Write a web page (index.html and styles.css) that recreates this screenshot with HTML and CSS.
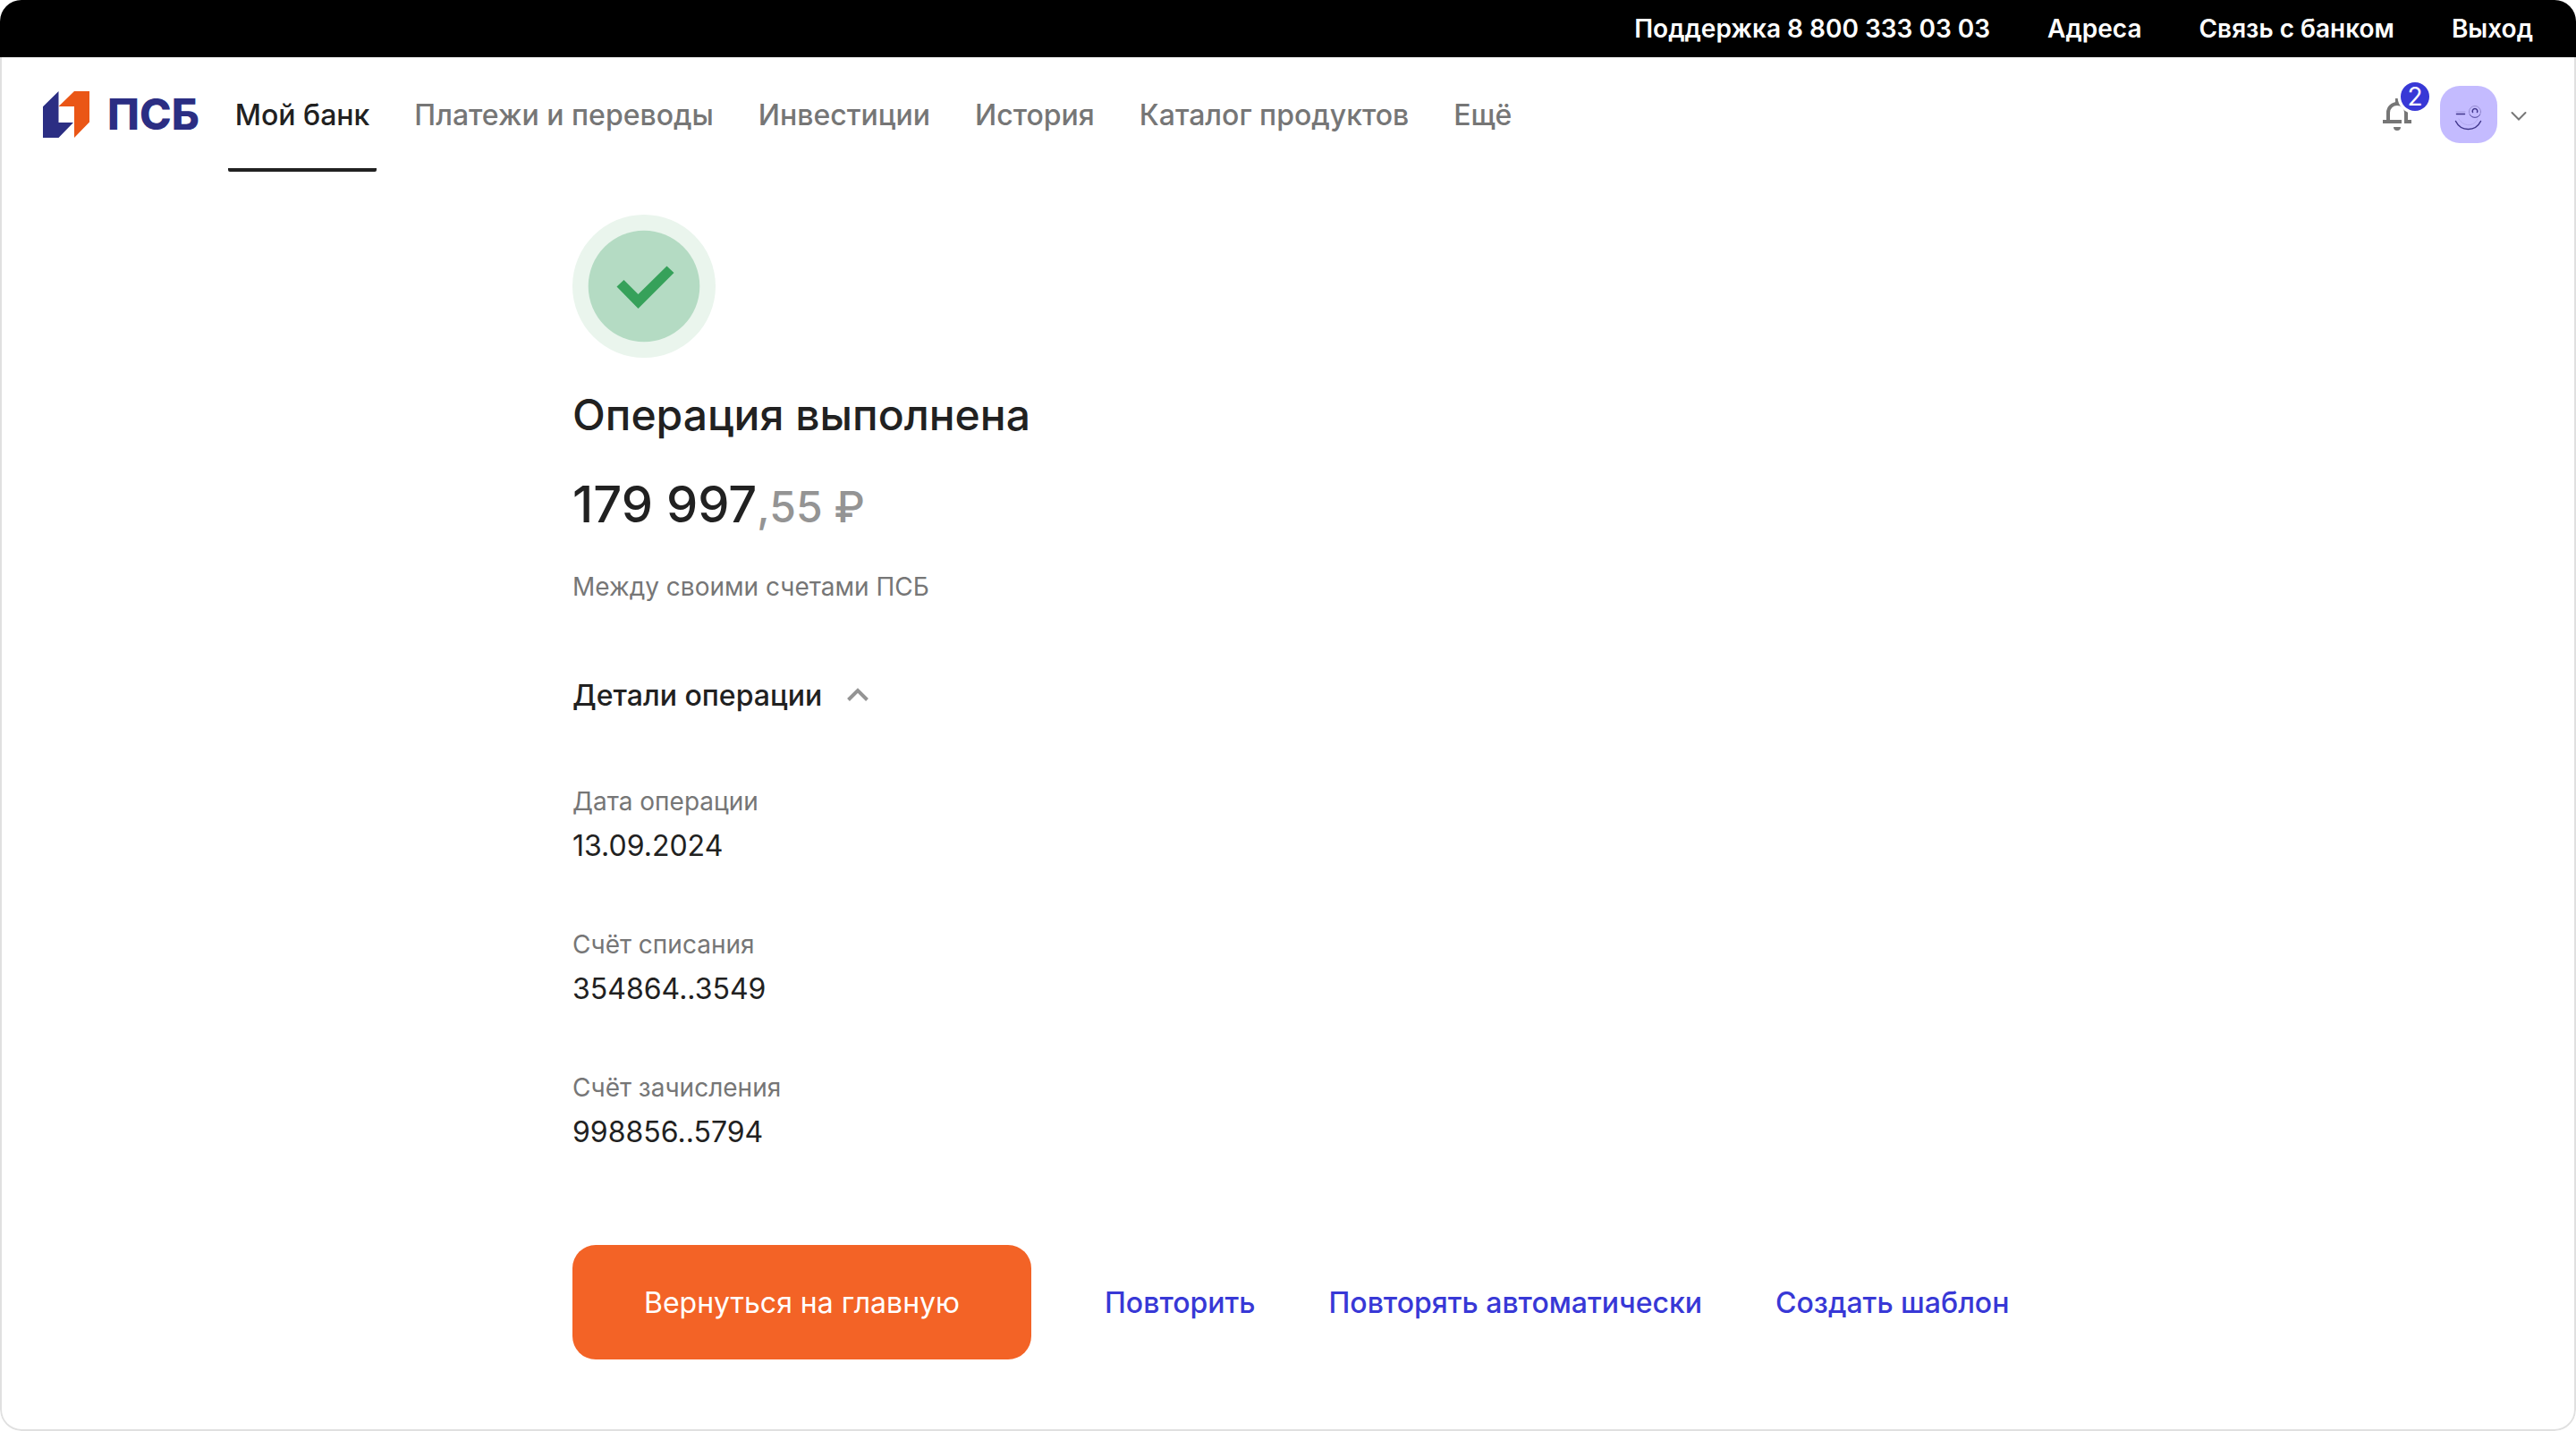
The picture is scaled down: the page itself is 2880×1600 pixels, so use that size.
FILE: index.html
```html
<!DOCTYPE html>
<html lang="ru">
<head>
  <meta charset="utf-8">
  <meta name="viewport" content="width=device-width, initial-scale=1">
  <title>ПСБ — Операция выполнена</title>
  <link rel="stylesheet" href="styles.css">
</head>
<body>
  <div class="app">
    <nav class="topbar" aria-label="Служебное меню">
      <a href="tel:88003330303">Поддержка 8 800 333 03 03</a>
      <a href="#addresses">Адреса</a>
      <a href="#contact">Связь с банком</a>
      <a href="#logout">Выход</a>
    </nav>

    <div class="panel">
      <header class="header">
        <a class="logo" href="#home">
          <svg class="logo-mark" viewBox="0 0 52 52" aria-hidden="true">
            <path fill="#2b2e83" d="M0 17.300 17.500 0V35H34L17.500 52H0z"/>
            <path fill="#ea5616" d="M17.500 17 35 0H52V34.500L35 52V17z"/>
          </svg>
          <span class="logo-text">ПСБ</span>
        </a>
        <nav class="menu" aria-label="Основное меню">
          <a class="menu-item menu-item-active" href="#bank" aria-current="page">Мой банк</a>
          <a class="menu-item" href="#payments">Платежи и переводы</a>
          <a class="menu-item" href="#investments">Инвестиции</a>
          <a class="menu-item" href="#history">История</a>
          <a class="menu-item" href="#catalog">Каталог продуктов</a>
          <a class="menu-item" href="#more">Ещё</a>
        </nav>
        <div class="user">
          <button class="icon-button bell" type="button" aria-label="Уведомления">
            <svg viewBox="0 0 48 48" aria-hidden="true">
              <path fill="none" stroke="#767676" stroke-width="4" d="M14 31V22A10 10 0 0 1 34 22V31"/>
              <path fill="#767676" d="M22 6h4v6h-4zM8 30h32v4H8zM20 38h8a4 4 0 0 1-8 0z"/>
              <path fill="#fff" d="M29 29h3v5h-3z"/>
              <circle cx="44" cy="4" r="19.500" fill="#fff"/>
            </svg>
            <span class="badge">2</span>
          </button>
          <button class="icon-button profile" type="button" aria-label="Профиль">
            <svg class="avatar" viewBox="0 0 64 64" aria-hidden="true">
              <rect width="64" height="64" rx="22" fill="#c4bbff"/>
              <g fill="none" stroke-linecap="round">
                <path stroke="#a69de0" d="M18 29h10"/>
                <path stroke="#41378c" stroke-width="1.500" d="M18.500 31.500h9"/>
                <circle cx="39" cy="29" r="6.500" stroke="#958bd2"/>
                <path stroke="#5a50a6" d="M33.500 32.500a6.500 6.500 0 0 0 11 0"/>
                <path stroke="#41378c" stroke-width="1.500" d="M36.500 29.500a2.800 2.800 0 1 1 5 0"/>
                <path stroke="#b3aaee" d="M21 37c5 9 17 9 21 0"/>
                <path stroke="#41378c" stroke-width="1.500" d="M17.500 39.500c6 12 22 12 28 0"/>
              </g>
            </svg>
            <svg class="chevron" viewBox="0 0 32 32" aria-hidden="true">
              <path fill="none" stroke="#767676" stroke-width="2" stroke-linecap="round" d="m8.500 14 7.500 7.500 7.500-7.500"/>
            </svg>
          </button>
        </div>
      </header>

      <main class="content">
        <svg class="status" viewBox="0 0 160 160" aria-hidden="true">
          <circle cx="80" cy="80" r="80" fill="#eaf5ed"/>
          <circle cx="80" cy="80" r="62.300" fill="#b4dbc3"/>
          <path fill="#36a15a" d="m49.500 80.500 8-7.500 16 16 32-31.500 8 7.500-40 40z"/>
        </svg>
        <h1 class="title">Операция выполнена</h1>
        <p class="amount">179 997<span class="amount-fraction">,55 ₽</span></p>
        <p class="subtitle">Между своими счетами ПСБ</p>

        <button class="toggle" type="button" aria-expanded="true" aria-controls="details">
          Детали операции
          <svg class="chevron" viewBox="0 0 32 32" aria-hidden="true">
            <path fill="none" stroke="#949494" stroke-width="4" d="m5.500 20.500 10.500-10.500 10.500 10.500"/>
          </svg>
        </button>
        <dl class="details" id="details">
          <div>
            <dt>Дата операции</dt>
            <dd>13.09.2024</dd>
          </div>
          <div>
            <dt>Счёт списания</dt>
            <dd>354864..3549</dd>
          </div>
          <div>
            <dt>Счёт зачисления</dt>
            <dd>998856..5794</dd>
          </div>
        </dl>

        <div class="actions">
          <button class="button-primary" type="button">Вернуться на главную</button>
          <button class="button-link" type="button">Повторить</button>
          <button class="button-link" type="button">Повторять автоматически</button>
          <button class="button-link" type="button">Создать шаблон</button>
        </div>
      </main>
    </div>
  </div>
</body>
</html>
```
FILE: styles.css
```css
* {
  box-sizing: border-box;
}

body {
  margin: 0;
  background: #fff;
  color: #212121;
  font-family: Inter, "Liberation Sans", sans-serif;
  font-size: 32px;
  line-height: 40px;
}

h1, p, dl, dd {
  margin: 0;
}

a {
  color: inherit;
  text-decoration: none;
}

button {
  padding: 0;
  border: 0;
  background: none;
  color: inherit;
  font: inherit;
  cursor: pointer;
}

svg {
  display: block;
}

.app {
  display: flex;
  flex-direction: column;
  min-height: 100vh;
  overflow: hidden;
  border-radius: 24px;
}

.topbar {
  display: flex;
  flex-wrap: wrap;
  justify-content: flex-end;
  gap: 0 64px;
  padding: 12px 48px;
  background: #000;
  color: #fff;
  font-size: 28px;
  font-weight: 600;
}

.panel {
  flex: 1;
  border: 2px solid #e0e0e0;
  border-top: 0;
  border-radius: 0 0 24px 24px;
}

.header {
  display: flex;
  align-items: stretch;
  min-height: 128px;
  padding: 0 46px;
}

.logo {
  display: flex;
  align-items: center;
  gap: 20px;
  margin-right: 32px;
  color: #2b2e83;
}

.logo-mark {
  width: 52px;
  height: 52px;
}

.logo-text {
  font-size: 48px;
  font-weight: 800;
}

.menu {
  display: flex;
  flex: 1;
  gap: 34px;
  color: #767676;
  font-weight: 500;
}

.menu-item {
  display: flex;
  align-items: center;
  padding: 6px 8px 0;
  border-bottom: 4px solid transparent;
}

.menu-item-active {
  border-radius: 2px;
  border-color: #212121;
  color: #212121;
}

.user {
  display: flex;
  align-items: center;
  gap: 24px;
}

.icon-button {
  position: relative;
  display: flex;
  align-items: center;
  gap: 8px;
}

.bell svg {
  width: 48px;
  height: 48px;
  overflow: visible;
}

.badge {
  position: absolute;
  top: -12px;
  right: -12px;
  width: 32px;
  height: 32px;
  border-radius: 50%;
  background: #3838d6;
  color: #fff;
  font-size: 28px;
  line-height: 32px;
  text-align: center;
}

.avatar {
  width: 64px;
  height: 64px;
}

.chevron {
  width: 32px;
  height: 32px;
}

.content {
  padding: 48px 46px 78px max(46px, calc(50% - 800px));
}

.status {
  width: 160px;
  height: 160px;
}

.title {
  margin-top: 32px;
  font-size: 48px;
  font-weight: 500;
  line-height: 64px;
}

.amount {
  margin-top: 32px;
  font-size: 56px;
  font-weight: 500;
  line-height: 72px;
}

.amount-fraction {
  color: #949494;
  font-size: 48px;
  line-height: 48px;
}

.subtitle {
  margin-top: 36px;
  color: #767676;
  font-size: 28px;
}

.toggle {
  display: flex;
  align-items: center;
  gap: 24px;
  margin-top: 82px;
  font-weight: 500;
}

.details {
  display: grid;
  gap: 66px;
  margin-top: 78px;
}

.details dt {
  color: #767676;
  font-size: 28px;
}

.details dd {
  margin-top: 6px;
  line-height: 48px;
}

.actions {
  display: flex;
  flex-wrap: wrap;
  align-items: center;
  gap: 32px 82px;
  margin-top: 102px;
}

.button-primary {
  padding: 45px 80px 43px;
  border-radius: 26px;
  background: #f36326;
  color: #fff;
}

.button-link {
  padding-top: 2px;
  color: #3838d6;
  font-weight: 500;
}
```
